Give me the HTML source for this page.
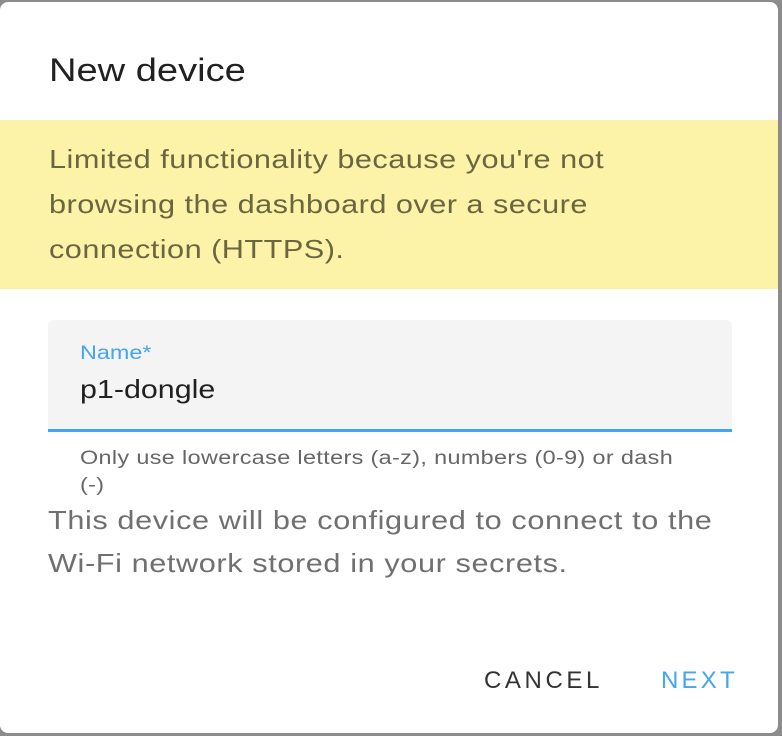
<!DOCTYPE html>
<html><head><style>
html,body{margin:0;padding:0;width:782px;height:736px;background:#8c8c8c;overflow:hidden;font-family:"Liberation Sans",sans-serif}
.d{position:absolute;left:0;top:2px;width:778px;height:731px;background:#fff;border-radius:8px;overflow:hidden}
.s{transform-origin:0 0;white-space:nowrap}
.t{position:absolute;left:49px;top:50px;font-size:32px;color:#212121;transform:scaleX(1.19)}
.w{position:absolute;left:0;top:118px;width:100%;height:169px;background:#fdf3a8}
.wt{position:absolute;left:49px;top:17px;font-size:26px;line-height:45px;color:#6a6640;letter-spacing:.4px;transform:scaleX(1.18)}
.f{position:absolute;left:48px;top:318px;width:684px;height:109px;background:#f4f4f4;border-radius:6px 6px 0 0;border-bottom:3px solid #42a5f5}
.l{position:absolute;left:32px;top:23px;font-size:19px;color:#42a5f5;transform:scaleX(1.23)}
.v{position:absolute;left:32px;top:54px;font-size:26px;color:#212121;transform:scaleX(1.17)}
.h{position:absolute;left:80px;top:443px;font-size:19px;line-height:27px;color:#666;letter-spacing:.3px;transform:scaleX(1.23)}
.b{position:absolute;left:48px;top:497px;font-size:26px;line-height:43px;color:#707070;letter-spacing:.5px;transform:scaleX(1.18)}
.bt{position:absolute;top:665px;font-size:24px}
</style></head><body>
<div class="d">
<div class="t s">New device</div>
<div class="w"><div class="wt s">Limited functionality because you're not<br>browsing the dashboard over a secure<br>connection (HTTPS).</div></div>
<div class="f"><div class="l s">Name*</div><div class="v s">p1-dongle</div></div>
<div class="h s">Only use lowercase letters (a-z), numbers (0-9) or dash<br>(-)</div>
<div class="b s">This device will be configured to connect to the<br>Wi-Fi network stored in your secrets.</div>
<div class="bt" style="left:484px;color:#333;letter-spacing:3.6px">CANCEL</div>
<div class="bt" style="left:661px;color:#42a5f5;letter-spacing:3.2px">NEXT</div>
</div>
</body></html>
